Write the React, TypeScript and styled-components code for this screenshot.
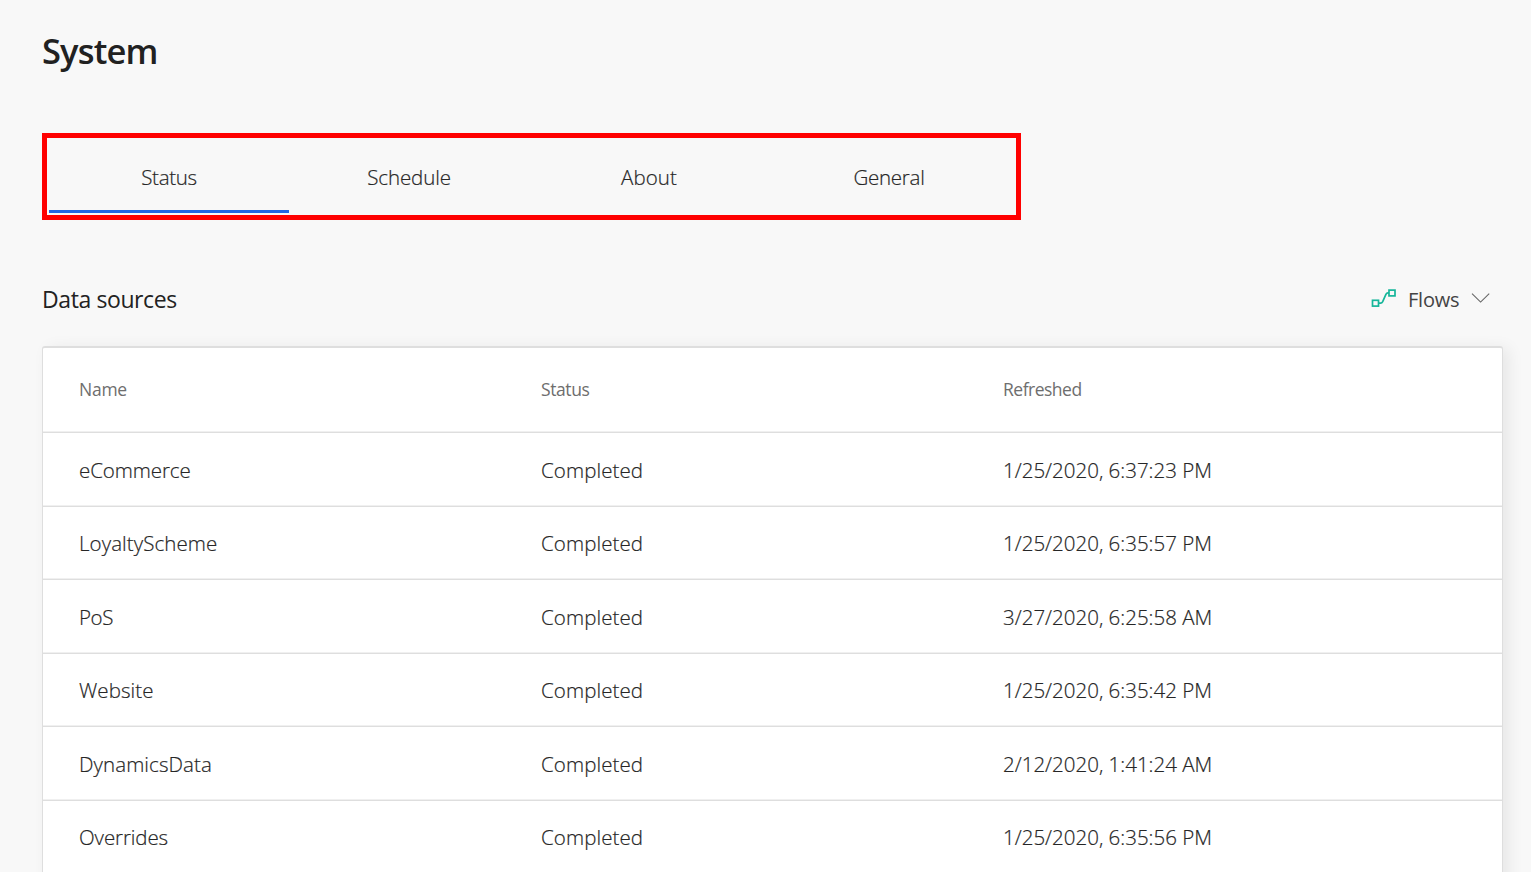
import React from 'react';
import styled, { createGlobalStyle } from 'styled-components';

const GlobalStyle = createGlobalStyle`
  * { box-sizing: border-box; }
  html, body { margin: 0; height: 100%; overflow: hidden; background: #f8f8f8; }
  body { font-family: "Open Sans", "Noto Sans", sans-serif; color: #222; }
`;

const Page = styled.main`
  height: 872px;
  overflow: hidden;
  padding: 26px 28px 0 42px;
`;

const Title = styled.h1`
  margin: 0;
  height: 107px;
  font-size: 34.5px;
  line-height: 50px;
  font-weight: 600;
  color: #212121;
`;

const Tabs = styled.nav`
  display: flex;
  width: 979px;
  height: 87px;
  padding: 0 2px;
  border: 5px solid #ff0000;
`;

const Tab = styled.button<{ $active?: boolean }>`
  width: 240px;
  height: 75px;
  padding: 5px 0 0;
  border: 0;
  border-bottom: 3px solid ${p => (p.$active ? '#2266e3' : 'transparent')};
  background: none;
  font: 300 20.5px/28px "Open Sans", sans-serif;
  -webkit-text-stroke: 0.2px currentColor;
  color: #262626;
`;

const Text = styled.span<{ $spacing?: number }>`
  letter-spacing: ${p => p.$spacing ?? 0}px;
`;

const SectionBar = styled.header`
  display: flex;
  align-items: center;
  justify-content: space-between;
  height: 126px;
  padding: 32px 13px 0 0;
`;

const SectionTitle = styled.h2`
  margin: 0;
  font-size: 23px;
  line-height: 32px;
  font-weight: 400;
`;

const Picker = styled.button`
  display: flex;
  align-items: center;
  padding: 0;
  border: 0;
  background: none;
  font: 400 20px/28px "Open Sans", sans-serif;
  color: #444;
`;

const PickerLabel = styled.span`
  width: 51px;
  margin: 1px 12px 0 11px;
  white-space: nowrap;
  letter-spacing: -0.2px;
`;

const Card = styled.section`
  width: 1461px;
  height: 600px;
  border: 1px solid #dedede;
  border-top: 2px solid #dedede;
  border-radius: 3px;
  background: #fff;
  box-shadow: 6px 2px 16px rgba(0, 0, 0, 0.07);
`;

const Row = styled.div<{ $head?: boolean }>`
  display: grid;
  grid-template-columns: 462px 462px 1fr;
  align-items: center;
  height: ${p => (p.$head ? 85 : 73.5)}px;
  padding: 0 0 ${p => (p.$head ? 2 : 0)}px 36px;
  padding-top: ${p => (p.$head ? 0 : 0.5)}px;
  border-bottom: 1px solid #dedede;
  box-shadow: inset 0 -1px 0 #f0f0f0;
  font-size: ${p => (p.$head ? 17.5 : 20.5)}px;
  line-height: 28px;
  font-weight: ${p => (p.$head ? 400 : 300)};
  -webkit-text-stroke: ${p => (p.$head ? 0 : 0.2)}px currentColor;
  color: ${p => (p.$head ? '#6e6e6e' : '#262626')};
`;

const tabs = [
  { label: 'Status', spacing: -0.3 },
  { label: 'Schedule', spacing: -0.1 },
  { label: 'About', spacing: 0.1 },
  { label: 'General', spacing: -0.25 },
];

const sources = [
  { name: 'eCommerce', refreshed: '1/25/2020, 6:37:23 PM', spacing: -0.1 },
  { name: 'LoyaltyScheme', refreshed: '1/25/2020, 6:35:57 PM', spacing: 0.08 },
  { name: 'PoS', refreshed: '3/27/2020, 6:25:58 AM', spacing: -0.4 },
  { name: 'Website', refreshed: '1/25/2020, 6:35:42 PM', spacing: 0.08 },
  { name: 'DynamicsData', refreshed: '2/12/2020, 1:41:24 AM', spacing: 0.08 },
  { name: 'Overrides', refreshed: '1/25/2020, 6:35:56 PM', spacing: -0.1 },
];

const FlowIcon = () => (
  <svg width="26" height="20" viewBox="0 0 26 20" fill="none" stroke="#16b69a" strokeWidth="1.7">
    <rect x="1.5" y="11.3" width="6" height="5.8" />
    <rect x="18" y="1.1" width="6" height="5.8" />
    <path d="M7.8 14.2h1.8c1.2 0 1.6-.5 2.1-1.5l3.2-7.3c.5-1 .9-1.5 2.1-1.5h1" />
  </svg>
);

const ChevronIcon = () => (
  <svg width="19" height="12" viewBox="0 0 19 12" fill="none" stroke="#666" strokeWidth="1.1">
    <path d="M1 0.6l8.6 8.5 8.6-8.5" />
  </svg>
);

export default function App() {
  return (
    <>
      <GlobalStyle />
      <Page>
        <Title><Text $spacing={-0.85}>System</Text></Title>
        <Tabs>
          {tabs.map((tab, i) => (
            <Tab key={tab.label} $active={i === 0}>
              <Text $spacing={tab.spacing}>{tab.label}</Text>
            </Tab>
          ))}
        </Tabs>
        <SectionBar>
          <SectionTitle><Text $spacing={-0.4}>Data sources</Text></SectionTitle>
          <Picker>
            <FlowIcon />
            <PickerLabel>Flows</PickerLabel>
            <ChevronIcon />
          </Picker>
        </SectionBar>
        <Card>
          <Row $head>
            <Text $spacing={-0.25}>Name</Text>
            <Text $spacing={-0.4}>Status</Text>
            <Text $spacing={-0.5}>Refreshed</Text>
          </Row>
          {sources.map(source => (
            <Row key={source.name}>
              <Text $spacing={source.spacing}>{source.name}</Text>
              <Text $spacing={0.1}>Completed</Text>
              <Text>{source.refreshed}</Text>
            </Row>
          ))}
        </Card>
      </Page>
    </>
  );
}
